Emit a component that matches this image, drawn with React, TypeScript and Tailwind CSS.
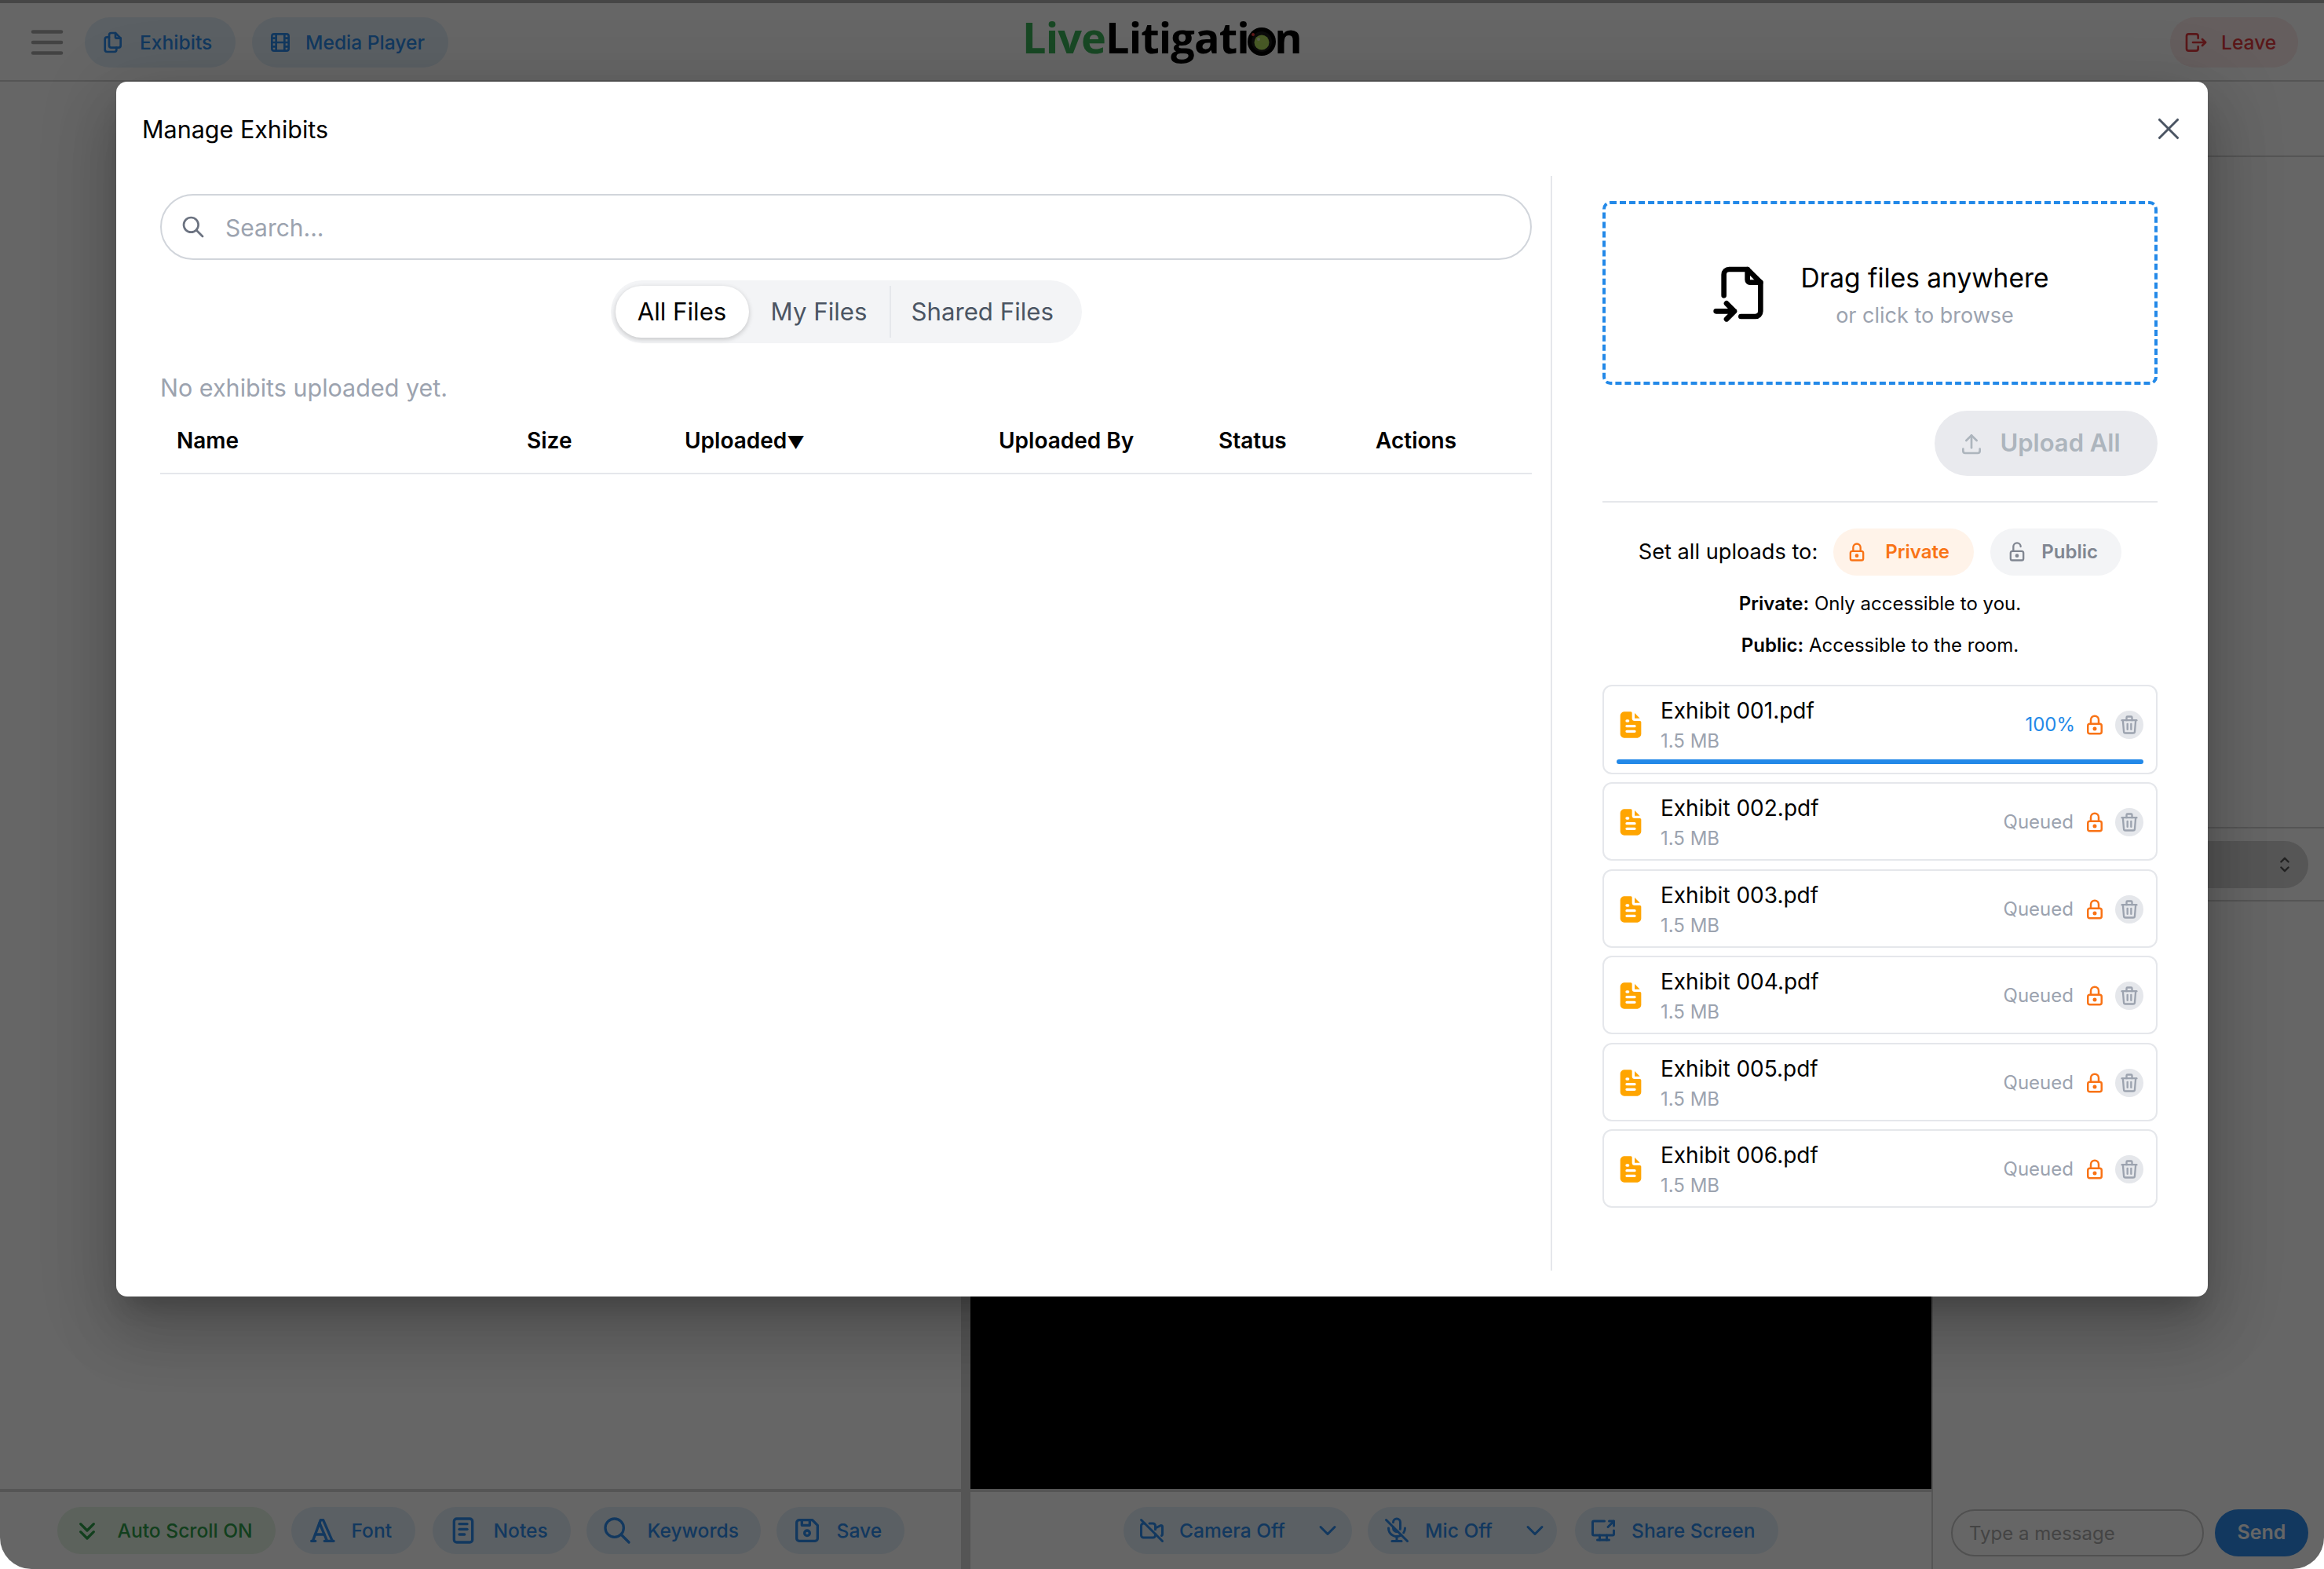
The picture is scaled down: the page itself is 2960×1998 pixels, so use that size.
import React from "react";
import {
  TbMenu2, TbFiles, TbMovie, TbLogout, TbChevronsDown, TbTypography, TbNotes, TbSearch, TbDeviceFloppy,
  TbVideoOff, TbMicrophoneOff, TbScreenShare, TbChevronDown, TbSelector, TbX, TbFileImport, TbUpload,
  TbLock, TbLockOpen, TbTrash,
} from "react-icons/tb";

const files = ["Exhibit 001.pdf", "Exhibit 002.pdf", "Exhibit 003.pdf", "Exhibit 004.pdf", "Exhibit 005.pdf", "Exhibit 006.pdf"];

function Pill({ className, children }: { className: string; children: React.ReactNode }) {
  return (
    <button className={`flex h-[60px] items-center rounded-[30px] text-[24.6px] font-medium whitespace-nowrap ${className}`}>
      {children}
    </button>
  );
}

function FileDoc() {
  return (
    <svg viewBox="0 0 24 24" width={40} height={40} className="ml-[-2px] shrink-0 text-[#ffa500]">
      <path fill="currentColor" d="M12 2l.117 .007a1 1 0 0 1 .876 .876l.007 .117v4l.005 .15a2 2 0 0 0 1.838 1.844l.157 .006h4l.117 .007a1 1 0 0 1 .876 .876l.007 .117v9a3 3 0 0 1 -2.824 2.995l-.176 .005h-10a3 3 0 0 1 -2.995 -2.824l-.005 -.176v-14a3 3 0 0 1 2.824 -2.995l.176 -.005z" />
      <path fill="currentColor" d="M19 7h-4l-.001 -4.001z" />
      <path stroke="#fff" strokeWidth="2" strokeLinecap="round" fill="none" d="M9 9h1M9 13h6M9 17h6" />
    </svg>
  );
}

function Logo() {
  return (
    <div className="mb-[14px] flex items-baseline text-[54px] leading-[64px] font-bold tracking-[-0.9px] text-black [font-family:'Open_Sans',sans-serif]">
      <span className="text-[#3cb45a]">Live</span>
      <span>
        Litigati
        <span className="relative inline-block">
          o
          <svg viewBox="0 0 36 36" className="absolute left-1/2 top-1/2 h-[36px] w-[36px] -translate-x-1/2 -translate-y-[12px]">
            <circle cx="18" cy="18" r="18" fill="#000" />
            <circle cx="18" cy="18" r="13" fill="#1c1c1c" />
            <circle cx="18" cy="19" r="9.5" fill="#b4e060" />
            <circle cx="14" cy="15" r="2" fill="#e6f4c8" />
            <circle cx="7" cy="9" r="2" fill="#f04040" />
          </svg>
        </span>
        n
      </span>
    </div>
  );
}

function FileCard({ name, index }: { name: string; index: number }) {
  const done = index === 0;
  return (
    <div className="flex flex-col rounded-[12px] border-2 border-[#e5e7eb] px-[16px] pt-[10px] pb-[8px]">
      <div className="flex items-center">
        <FileDoc />
        <div className="ml-[18px] flex min-w-0 flex-1 flex-col">
          <span className="text-[28px] leading-[42px] text-black">{name}</span>
          <span className="text-[24px] leading-[36px] text-[#9ca3af]">1.5 MB</span>
        </div>
        <span className={`text-[24px] ${done ? "mr-[10px] text-[#2389e8]" : "mr-[12px] text-[#9ca3af]"}`}>{done ? "100%" : "Queued"}</span>
        <TbLock size={30} className="shrink-0 text-[#f97316]" />
        <span className="ml-[11px] flex h-[36px] w-[36px] shrink-0 items-center justify-center rounded-full bg-[#e5e7eb] text-[#9ca3af]">
          <TbTrash size={28} />
        </span>
      </div>
      {done && <div className="mt-[5px] mb-[3px] h-[6px] rounded-full bg-[#2389e8]" />}
    </div>
  );
}

function Modal() {
  const cols = "grid grid-cols-[446px_201px_400px_280px_200px_220px]";
  return (
    <div className="absolute left-[148px] top-[104px] flex h-[1547px] w-[2664px] flex-col rounded-[14px] bg-white text-black shadow-[0_22px_30px_-14px_rgba(0,0,0,0.2),0_48px_76px_6px_rgba(0,0,0,0.14),0_18px_92px_16px_rgba(0,0,0,0.12)]">
      <div className="flex h-[120px] items-center justify-between pl-[33px] pr-[27px]">
        <h2 className="mt-[2px] text-[30.5px] font-normal">Manage Exhibits</h2>
        <TbX size={46} strokeWidth={1.6} className="text-[#4b5563]" />
      </div>
      <div className="flex flex-1 pb-[33px]">
        <div className="w-[1829px] border-r-2 border-[#e5e7eb] pl-[56px] pr-[24px] pt-[23px]">
          <div className="flex h-[84px] items-center rounded-full border-2 border-[#d1d5db] px-[24px]">
            <TbSearch size={32} className="shrink-0 text-[#6b7280]" />
            <input placeholder="Search..." className="ml-[25px] mt-[2px] flex-1 bg-transparent text-[30px] outline-none placeholder:text-[#9ca3af]" />
          </div>
          <div className="mt-[26px] flex justify-center">
            <div className="flex h-[80px] w-[600px] items-center rounded-full bg-[#f3f4f6] pl-[6px] text-[31.2px]">
              <span className="flex h-[66px] w-[170px] items-center justify-center rounded-full bg-white text-black shadow-[0_2px_6px_rgba(0,0,0,0.2)]">All Files</span>
              <span className="flex h-[66px] w-[179px] items-center justify-center text-[#4b5563]">My Files</span>
              <span className="flex h-[66px] items-center border-l-2 border-[#e5e7eb] pl-[26px] text-[#4b5563]">Shared Files</span>
            </div>
          </div>
          <p className="mt-[35px] text-[30.5px] leading-[44px] text-[#9ca3af]">No exhibits uploaded yet.</p>
          <div className={`${cols} mt-[17px] h-[71px] items-start border-b-2 border-[#e5e7eb] pt-[10px] text-[28px] leading-[36px] font-semibold text-black`}>
            <span className="pl-[21px]">Name</span>
            <span className="pl-[21px]">Size</span>
            <span className="pl-[21px]">Uploaded<span className="text-[22px]">▼</span></span>
            <span className="pl-[21px]">Uploaded By</span>
            <span className="pl-[21px]">Status</span>
            <span className="pl-[21px]">Actions</span>
          </div>
        </div>
        <div className="flex flex-1 flex-col pl-[64px] pr-[64px] pt-[32px]">
          <div className="flex h-[234px] items-center justify-center gap-[34px] rounded-[10px] border-4 border-dashed border-[#2389e8]">
            <TbFileImport size={80} className="shrink-0 text-black" />
            <div className="mt-[4px] flex flex-col items-center">
              <span className="text-[33.5px] leading-[52px] text-black">Drag files anywhere</span>
              <span className="mt-[2px] text-[27px] leading-[40px] text-[#9ca3af]">or click to browse</span>
            </div>
          </div>
          <div className="mt-[33px] flex justify-end">
            <button className="flex h-[83px] w-[284px] items-center justify-center gap-[20px] rounded-full bg-[#e9eaee] pr-[16px] text-[31px] font-semibold text-[#adb5bd]">
              <TbUpload size={32} />
              Upload All
            </button>
          </div>
          <div className="mt-[32px] h-[2px] bg-[#e5e7eb]" />
          <div className="mt-[33px] flex items-center justify-center">
            <span className="text-[27.2px] whitespace-nowrap text-black">Set all uploads to:</span>
            <button className="ml-[20px] flex h-[60px] w-[179px] items-center rounded-full bg-[#fff3e9] pl-[16px] text-[24px] font-semibold text-[#f97316]">
              <TbLock size={28} />
              <span className="ml-[22px]">Private</span>
            </button>
            <button className="ml-[21px] flex h-[60px] w-[167px] items-center rounded-full bg-[#f3f4f6] pl-[20px] text-[24px] font-semibold text-[#808691]">
              <TbLockOpen size={28} />
              <span className="ml-[17px]">Public</span>
            </button>
          </div>
          <p className="mt-[19px] text-center text-[24px] leading-[34px] text-black"><b className="font-semibold">Private:</b> Only accessible to you.</p>
          <p className="mt-[19px] text-center text-[24px] leading-[34px] text-black"><b className="font-semibold">Public:</b> Accessible to the room.</p>
          <div className="mt-[33px] flex flex-col gap-[10.4px]">
            {files.map((f, i) => (
              <FileCard key={f} name={f} index={i} />
            ))}
          </div>
        </div>
      </div>
    </div>
  );
}

export default function App() {
  const blue = "bg-[#e3f0fa] text-[#2d8ced]";
  return (
    <div className="h-screen w-full bg-white [font-family:Inter,sans-serif]">
      <div className="relative flex h-full flex-col overflow-hidden rounded-b-[40px] bg-white">
        <div className="h-[4px] bg-[#b0b0b0]" />
        <header className="grid h-[100px] shrink-0 grid-cols-[1fr_auto_1fr] items-center border-b-[2px] border-[#d4d4d4] pb-[6px] pt-[8px]">
          <div className="flex items-center">
            <TbMenu2 size={54} className="ml-[33px] text-[#a8a8a8]" />
            <Pill className={`ml-[21px] h-[64px] w-[192px] rounded-[32px] pl-[19px] gap-[19px] ${blue}`}>
              <TbFiles size={32} />
              Exhibits
            </Pill>
            <Pill className={`ml-[21px] h-[64px] w-[250px] rounded-[32px] pl-[20px] gap-[16px] ${blue}`}>
              <TbMovie size={32} />
              Media Player
            </Pill>
          </div>
          <Logo />
          <div className="flex justify-end pr-[33px]">
            <Pill className="h-[64px] w-[163px] rounded-[32px] bg-[#fdeaea] pl-[17px] gap-[16px] text-[#e03a3f]">
              <TbLogout size={32} />
              Leave
            </Pill>
          </div>
        </header>
        <div className="flex min-h-0 flex-1">
          <section className="flex w-[1224px] flex-col">
            <div className="flex-1" />
            <div className="flex h-[102px] items-center justify-center gap-[20px] border-t-4 border-[#d4d4d4]">
              <Pill className="w-[278px] bg-[#e6f5e6] pl-[18px] gap-[19px] text-[#2e9e4a]">
                <TbChevronsDown size={40} />
                Auto Scroll ON
              </Pill>
              <Pill className={`${blue} w-[158px] pl-[19px] gap-[18px]`}>
                <TbTypography size={40} />
                Font
              </Pill>
              <Pill className={`${blue} ml-[2px] w-[176px] pl-[19px] gap-[19px]`}>
                <TbNotes size={40} />
                Notes
              </Pill>
              <Pill className={`${blue} w-[222px] pl-[19px] gap-[19px]`}>
                <TbSearch size={40} />
                Keywords
              </Pill>
              <Pill className={`${blue} w-[163px] pl-[19px] gap-[18px]`}>
                <TbDeviceFloppy size={40} />
                Save
              </Pill>
            </div>
          </section>
          <div className="w-[12px] bg-[#d4d4d4]" />
          <section className="flex w-[1224px] flex-col">
            <div className="flex-1 bg-black" />
            <div className="flex h-[102px] items-center justify-center gap-[20px] border-t-4 border-[#d4d4d4]">
              <Pill className={`${blue} w-[291px] pl-[18px] pr-[13px] gap-[17px]`}>
                <TbVideoOff size={36} />
                Camera Off
                <TbChevronDown size={36} className="ml-auto" />
              </Pill>
              <Pill className={`${blue} w-[241px] pl-[19px] pr-[10px] gap-[18px]`}>
                <TbMicrophoneOff size={36} />
                Mic Off
                <TbChevronDown size={36} className="ml-auto" />
              </Pill>
              <Pill className={`${blue} ml-[3px] w-[259px] pl-[18px] gap-[18px]`}>
                <TbScreenShare size={36} />
                Share Screen
              </Pill>
            </div>
          </section>
          <aside className="flex flex-1 flex-col border-l-2 border-[#d4d4d4]">
            <div className="h-[96px] border-b-2 border-[#d4d4d4]" />
            <div className="flex-1" />
            <div className="flex h-[95px] items-center border-y-2 border-[#d4d4d4] px-[20px]">
              <div className="flex h-[60px] flex-1 items-center justify-end rounded-full bg-[#d6d6d6] pr-[16px]">
                <TbSelector size={28} className="text-[#555]" />
              </div>
            </div>
            <div className="h-[774px]" />
            <div className="flex items-center gap-[14px] pb-[16px] pl-[23px] pr-[20px]">
              <input placeholder="Type a message" className="h-[60px] w-[322px] rounded-full border-2 border-[#c8c8c8] bg-white px-[21px] text-[24px] outline-none placeholder:text-[#aaaaaa]" />
              <button className="h-[60px] flex-1 rounded-full bg-[#2d8ced] text-[25px] font-semibold text-white">Send</button>
            </div>
          </aside>
        </div>
        <div className="absolute inset-0 bg-black/60" />
        <Modal />
      </div>
    </div>
  );
}
